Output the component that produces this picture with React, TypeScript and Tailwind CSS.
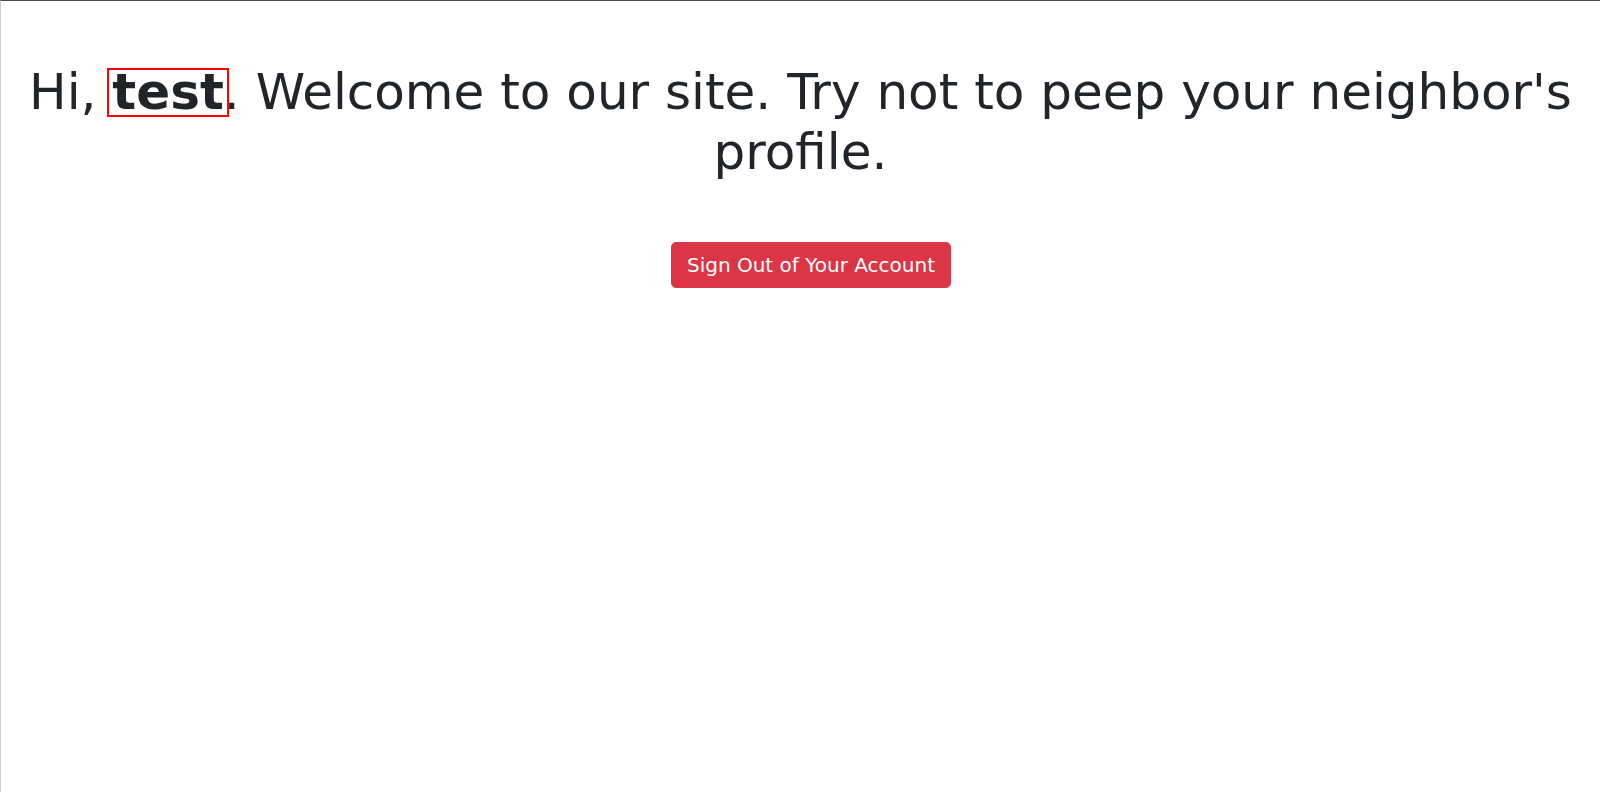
export default function App() {
  return (
    <div
      className="min-h-screen bg-white border-t border-l border-t-[#4a4a4a] border-l-[#cfcfcf] text-[#212529]"
      style={{ fontFamily: '"DejaVu Sans", sans-serif' }}
    >
      <div className="pt-[61px] px-[15px] text-center">
        <h1 className="text-[50px] leading-[60px] font-medium mb-[10px]">
          Hi,{" "}
          <span className="inline-block align-baseline font-bold leading-[43px] outline-2 outline-[#ff0000] outline-offset-[1px] px-[2px] -mx-[2px]">
            test
          </span>
          . Welcome to our site. Try not to peep your neighbor's profile.
        </h1>
        <div className="flex justify-center pl-[21px] mt-[60px]">
          <button className="bg-[#dc3545] text-white text-[20px] leading-[30px] px-[15px] py-[7px] border border-[#dc3545] rounded-[5px]">
            Sign Out of Your Account
          </button>
        </div>
      </div>
    </div>
  );
}
